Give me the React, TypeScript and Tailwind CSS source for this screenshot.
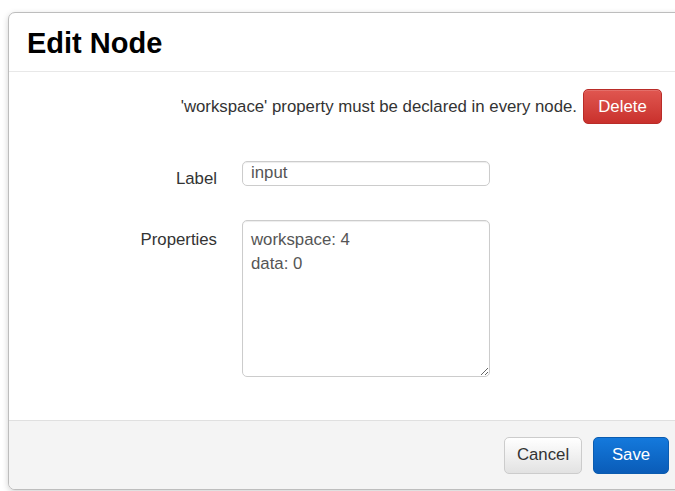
import React from "react";

const font = { fontFamily: '"Liberation Sans", Arial, sans-serif' };

export default function App() {
  return (
    <div
      className="w-[675px] h-[491px] overflow-hidden bg-white pl-[8px] pt-[12px]"
      style={font}
    >
      <div className="w-[690px] h-[478px] flex flex-col rounded-[7px] border border-[#bdbdbd] bg-white shadow-[0_2px_6px_rgba(0,0,0,0.18)] overflow-hidden">
        {/* header */}
        <div className="h-[59px] shrink-0 border-b border-[#e8e8e8] pl-[18px] flex items-center">
          <h3 className="text-[29px] font-bold leading-none text-black pt-[2px]">
            Edit Node
          </h3>
        </div>

        {/* body */}
        <div className="flex-1 flex flex-col">
          <div className="flex items-center justify-end gap-[6px] pr-[35px] pt-[17px]">
            <span className="text-[16.8px] text-[#333]">
              'workspace' property must be declared in every node.
            </span>
            <button className="h-[35px] w-[79px] rounded-[5px] border border-[#b92c28] bg-gradient-to-b from-[#e05650] to-[#c9302c] text-[16.8px] text-white shadow-[inset_0_1px_0_rgba(255,255,255,0.15)]">
              Delete
            </button>
          </div>

          <div className="flex items-start mt-[37px]">
            <label className="w-[208px] text-right text-[16.8px] text-[#333] pt-[5px]">
              Label
            </label>
            <div className="ml-[25px] w-[248px] h-[25px] rounded-[5px] border border-[#cccccc] px-[8px] text-[16.8px] leading-[21px] text-[#555] shadow-[inset_0_1px_1px_rgba(0,0,0,0.075)]">
              input
            </div>
          </div>

          <div className="flex items-start mt-[29px]">
            <label className="w-[208px] text-right text-[16.8px] text-[#333] pt-[7px]">
              Properties
            </label>
            <textarea
              readOnly
              defaultValue={"workspace: 4\ndata: 0"}
              className="ml-[25px] w-[248px] h-[157px] rounded-[5px] border border-[#cccccc] px-[8px] pt-[7px] text-[16.8px] leading-[24px] text-[#555] outline-none shadow-[inset_0_1px_1px_rgba(0,0,0,0.075)] resize"
              style={font}
            />
          </div>
        </div>

        {/* footer */}
        <div className="h-[69px] shrink-0 border-t border-[#e0e0e0] bg-[#f4f4f4] flex items-center justify-end gap-[11px] pr-[28px]">
          <button className="h-[37px] w-[78px] rounded-[5px] border border-[#cccccc] bg-gradient-to-b from-white to-[#e2e2e2] text-[16.8px] text-[#333]">
            Cancel
          </button>
          <button className="h-[37px] w-[76px] rounded-[5px] border border-[#0b5cb0] bg-gradient-to-b from-[#1479dc] to-[#0a5cb8] text-[16.8px] text-white">
            Save
          </button>
        </div>
      </div>
    </div>
  );
}
